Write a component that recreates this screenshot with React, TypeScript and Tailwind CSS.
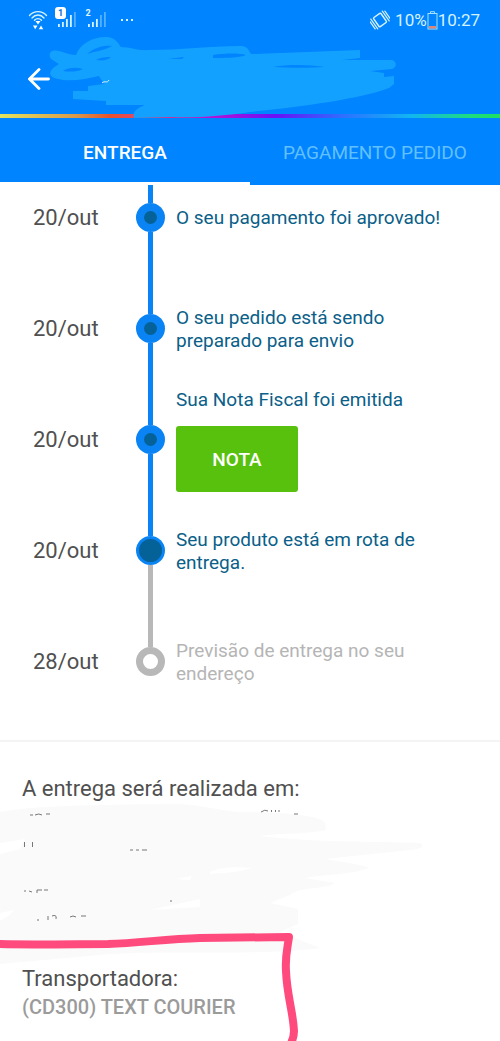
import clsx from "clsx";

type Step = {
  date: string;
  text: string;
  status: "done" | "current" | "pending";
  hasInvoice?: boolean;
};

const steps: Step[] = [
  { date: "20/out", text: "O seu pagamento foi aprovado!", status: "done" },
  { date: "20/out", text: "O seu pedido está sendo preparado para envio", status: "done" },
  { date: "20/out", text: "Sua Nota Fiscal foi emitida", status: "done", hasInvoice: true },
  { date: "20/out", text: "Seu produto está em rota de entrega.", status: "current" },
  { date: "28/out", text: "Previsão de entrega no seu endereço", status: "pending" },
];

const WifiIcon = () => (
  <svg width="20" height="20" viewBox="0 0 20 20" fill="none" stroke="#d5f3ff" strokeWidth="1.4" strokeLinecap="round" aria-hidden="true">
    <path d="M1.500 5.500C6 .3 14 .3 18.500 5.500M4 8C7.500 4 12.500 4 16 8M6.500 10.300C8.500 8 11.500 8 13.500 10.300" />
    <path d="M7.500 11h5L10 14.500zM5 15.500h4.500L7.200 19.300zM10.800 19.300h4.500L13 15.500z" fill="#fff" stroke="none" />
  </svg>
);

const SignalIcon = ({ sim, boxed, bars }: { sim: string; boxed?: boolean; bars: number }) => (
  <svg width="22" height="22" viewBox="0 0 22 22" aria-hidden="true">
    {[17, 15, 12, 8, 5].map((y, i) => (
      <rect
        key={y}
        x={3 + i * 4}
        y={y}
        width="1.800"
        height={20 - y}
        fill="#d5f3ff"
        opacity={i < bars ? 1 : 0.4}
      />
    ))}
    {boxed && <rect x="0" y="0" width="11" height="12" rx="3" fill="#fff" />}
    <text
      x={boxed ? 5.5 : 3}
      y="9"
      textAnchor="middle"
      fontSize="9"
      fontWeight="700"
      fill={boxed ? "#0a6ed0" : "#e4f7ff"}
    >
      {sim}
    </text>
  </svg>
);

const VibrateIcon = () => (
  <svg width="20" height="20" viewBox="0 0 20 20" fill="none" stroke="#d5f3ff" strokeLinecap="round" aria-hidden="true">
    <g transform="rotate(-35 10 10)">
      <rect x="5.500" y="4.500" width="9" height="11" rx="1" strokeWidth="1.500" />
      <path d="M3 4v12M.9 5.500v9M17 4v12M19.100 5.500v9" strokeWidth="1.200" />
    </g>
  </svg>
);

const BatteryIcon = () => (
  <svg width="11" height="19" viewBox="0 0 11 19" fill="none" aria-hidden="true">
    <path d="M3.500 2V.7h4V2" stroke="#a5e2ff" />
    <rect x="1" y="2.500" width="9" height="15.500" stroke="#a5e2ff" />
    <rect x="2" y="15" width="7" height="2.500" fill="#e08878" />
  </svg>
);

const BackIcon = () => (
  <svg width="22" height="22" viewBox="0 0 22 22" fill="none" stroke="#fff" strokeWidth="2.800" strokeLinecap="round" aria-hidden="true">
    <path d="M20.500 11H1.800M11 1.500L1.500 11 11 20.500" />
  </svg>
);

const TitleScribble = () => (
  <svg className="absolute left-0 top-0 pointer-events-none" width="500" height="120" viewBox="0 0 500 120" fill="none" aria-hidden="true">
    <path
      fill="#13a1ff"
      d="M52 51C60 49 66 55 76 55C80 44 92 37 106 37C115 37 118 43 121 47C131 47 137 51 150 50C180 50 210 46 240 46C250 46 249 54 252 54L360 50V58L342 60L392 60C397 61 397 68 392 69L370 71L384 73V77L394 76V84L389 88C360 99 300 107 250 112C225 116 195 118 171 117L134 118C132 112 137 108 145 105L106 105V101L73 99V91L88 91V86L104 84L99 76C86 79 70 82 58 79C48 77 48 71 56 66L59 64L51 59C49 56 49 53 52 51Z"
    />
    <path fill="#0084ff" d="M87 54C95 47 105 45 112 46C106 50 96 51 87 54ZM96 60C101 57 107 57 111 57C108 60 103 61 96 60ZM63 71C69 67 76 67 83 69C77 72 70 72 63 71ZM213 55C225 53 240 53 246 55C240 58 222 58 213 58ZM273 67C290 64 310 65 325 67C310 68 290 68 273 67ZM168 59L184 57L182 59Z" />
    <path d="M102 83C105 80 107 84 109 80" stroke="#d5f3ff" />
  </svg>
);

const AddressScribble = () => (
  <svg className="absolute left-0 top-0 pointer-events-none" width="500" height="300" viewBox="0 741 500 300" fill="none" aria-hidden="true">
    <path
      fill="#fafafa"
      d="M0 811C35 804 100 804 170 803C205 803 220 811 245 811C280 811 320 814 325 822L326 829C310 833 280 832 260 835C320 842 370 840 420 842C425 845 422 848 410 849L325 858C345 862 362 863 369 867C350 874 325 873 305 877L335 882C325 889 300 885 290 894L270 902L298 908V923L280 931L320 947C260 955 180 949 110 953L0 963Z"
    />
    <path
      fill="#fff"
      d="M0 842L25 838 20 848 0 853ZM210 871C222 865 240 866 252 867C240 871 225 872 210 873ZM175 878L192 875 190 879ZM150 909L200 898V906ZM0 912L14 909 10 914 0 920Z"
    />
    <path
      stroke="#777"
      d="M30 814h3M35 814q4-2 7 0M46 813h4M24.500 841v5M32.500 841v5M130 849h3M136 849h3M142 849h5M24 890h2M29 890l3 1M37 892v-3h5M44 889h4M170 900h2M37 919h2M48 919v-4M52 915q5-2 4 3M70 916q3-2 6 0M81 915h5M261 811q4-3 7-1M271.500 809v2M275.500 809v2M279 809v2M294 813h4"
    />
    <path
      stroke="#ff4a7e"
      strokeWidth="8"
      strokeLinecap="round"
      strokeLinejoin="round"
      d="M-4 943C30 944 80 943 108 943C140 942 165 938 200 937L289 936C287 950 285 956 286 970C287 995 293 1010 294 1030C294 1036 292 1041 289 1046"
    />
  </svg>
);

const StatusBar = () => (
  <div className="h-10 pl-[28px] pr-5 flex items-center justify-between text-[#d5f3ff]">
    <div className="flex items-center">
      <WifiIcon />
      <div className="ml-[7px] mb-1">
        <SignalIcon sim="1" boxed bars={4} />
      </div>
      <div className="ml-2 mb-1">
        <SignalIcon sim="2" bars={3} />
      </div>
      <div className="ml-[14px] flex gap-[3px]">
        <span className="size-[2px] bg-[#d5f3ff]" />
        <span className="size-[2px] bg-[#d5f3ff]" />
        <span className="size-[2px] bg-[#d5f3ff]" />
      </div>
    </div>
    <div className="flex items-center text-[17px] leading-5">
      <VibrateIcon />
      <span className="ml-[5px]">10%</span>
      <BatteryIcon />
      <span>10:27</span>
    </div>
  </div>
);

const Dot = ({ status }: { status: Step["status"] }) => {
  if (status === "pending") {
    return <span className="z-10 size-[29px] rounded-full border-[7px] border-[#b8b8b8] bg-white" />;
  }
  return (
    <span className="z-10 size-[29px] rounded-full bg-[#0a84f5] flex items-center justify-center">
      <span
        className={clsx(
          "rounded-full bg-[#056298]",
          status === "current" ? "size-[23px]" : "size-[13px]"
        )}
      />
    </span>
  );
};

const TimelineStep = ({ step }: { step: Step }) => {
  const { date, text, status, hasInvoice } = step;

  return (
    <li className="h-[111px] grid grid-cols-[136px_29px_1fr] items-center">
      <span className="pl-[33px] text-[22px] leading-6 text-[#505050]">{date}</span>
      <div className="h-full flex flex-col items-center">
        <span className={clsx("w-[5px] flex-1", status === "pending" ? "bg-[#b8b8b8]" : "bg-[#0a84f5]")} />
        <Dot status={status} />
        <span
          className={clsx(
            "w-[5px] flex-1",
            status === "done" && "bg-[#0a84f5]",
            status === "current" && "bg-[#b8b8b8]"
          )}
        />
      </div>
      <div
        className={clsx(
          "pl-[11px] pr-10 text-[19px] leading-[23px]",
          status === "pending" ? "text-[#b5b5b5]" : "text-[#0a6088]",
          hasInvoice && "flex flex-col items-start gap-[15px]"
        )}
      >
        <p className="max-w-[270px]">{text}</p>
        {hasInvoice && (
          <button className="h-[66px] w-[122px] rounded-[3px] bg-[#57c10d] pt-[2px] text-[19px] font-medium text-white">
            NOTA
          </button>
        )}
      </div>
    </li>
  );
};

const App = () => {
  return (
    <div className="min-h-screen bg-white font-['Roboto',sans-serif] overflow-x-hidden">
      <header className="relative bg-[#0084ff]">
        <StatusBar />
        <div className="h-[74px] pl-[28px] pt-1 flex items-center">
          <button aria-label="Voltar">
            <BackIcon />
          </button>
        </div>
        <div className="h-1 bg-[linear-gradient(90deg,#e3e35f_0%,#d99a4a_15%,#e5512e_22%,#e8475f_27%,#b812d5_42%,#6a10f5_55%,#2a78ff_70%,#12b5f0_82%,#1ddc80_94%,#1de060_100%)]" />
        <TitleScribble />
        <nav className="h-[67px] flex text-[19px]">
          <button className="flex-1 pt-[6px] border-b-[3px] border-white font-medium text-white">ENTREGA</button>
          <button className="flex-1 pt-[6px] border-b-[3px] border-transparent text-[#62c0ff]">PAGAMENTO PEDIDO</button>
        </nav>
      </header>

      <main>
        {/* The list is scrolled a little under the tabs */}
        <section className="overflow-hidden border-b-2 border-[#f4f4f4] pb-[23px]">
          <ol className="-mt-[23px]">
            {steps.map((step, i) => (
              <TimelineStep key={i} step={step} />
            ))}
          </ol>
        </section>

        <section className="relative h-[299px] overflow-hidden px-[22px] pt-[34px] text-[#505050]">
          <AddressScribble />
          <h2 className="relative text-[22px] leading-[26px]">A entrega será realizada em:</h2>
          <h2 className="relative mt-[164px] text-[22px] leading-[26px]">Transportadora:</h2>
          <p className="relative mt-[3px] text-[20px] leading-6 font-medium text-[#9b9b9b]">(CD300) TEXT COURIER</p>
        </section>
      </main>
    </div>
  );
};

export default App;
